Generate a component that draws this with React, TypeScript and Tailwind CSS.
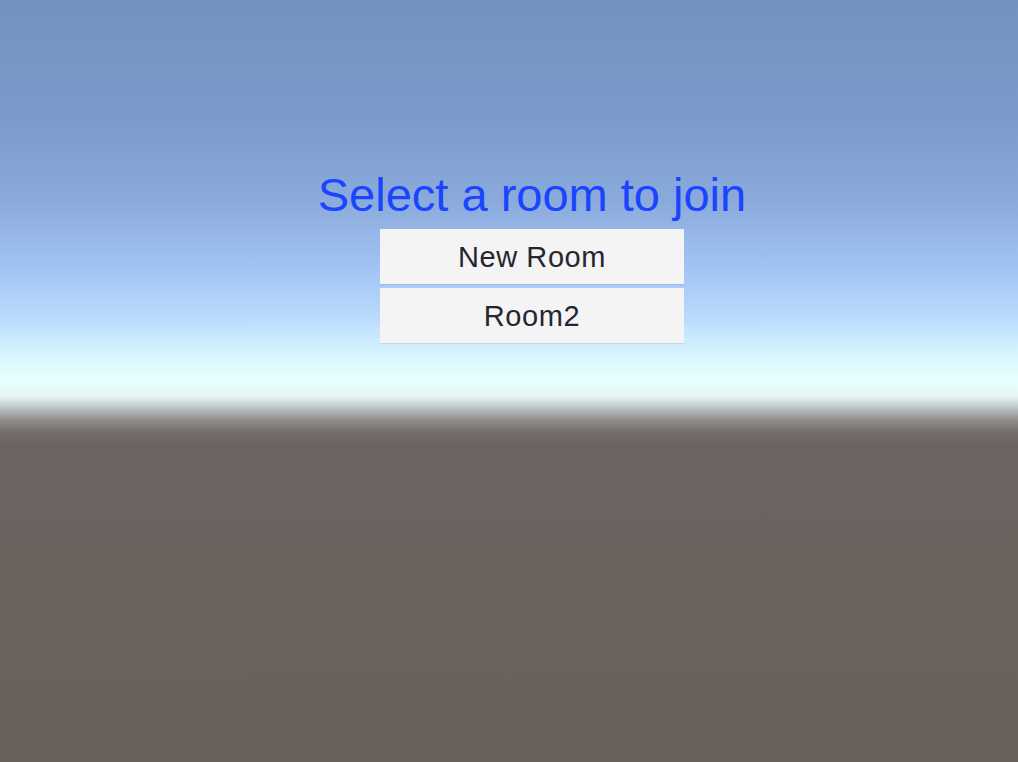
export default function App() {
  const rooms = ['New Room', 'Room2'];

  return (
    <div className="h-[762px] w-full overflow-hidden bg-[linear-gradient(to_bottom,#7392be_0px,#7c9bcb_120px,#8aaadc_200px,#a2c4f4_270px,#bcdcfd_320px,#d6f6ff_355px,#e8ffff_380px,#e6f6f6_396px,#bcc4c4_408px,#928e8d_420px,#756e6b_432px,#6b6460_444px,#67605b_762px)] font-['Liberation_Sans',Arial,sans-serif]">
      <div className="flex flex-col items-center pl-[46px] pt-[168px]">
        <h1 className="text-[47px] leading-[54px] text-[#1a44ff]">Select a room to join</h1>
        <div className="mt-[7px] flex flex-col items-center gap-[4px]">
          {rooms.map((room) => (
            <button
              key={room}
              className="flex h-[55px] w-[304px] items-center justify-center bg-[#f4f4f4] pt-[2px] text-[29px] tracking-[0.6px] text-[#262630] shadow-[0_1px_0_rgba(0,0,0,0.08)]"
            >
              {room}
            </button>
          ))}
        </div>
      </div>
    </div>
  );
}
